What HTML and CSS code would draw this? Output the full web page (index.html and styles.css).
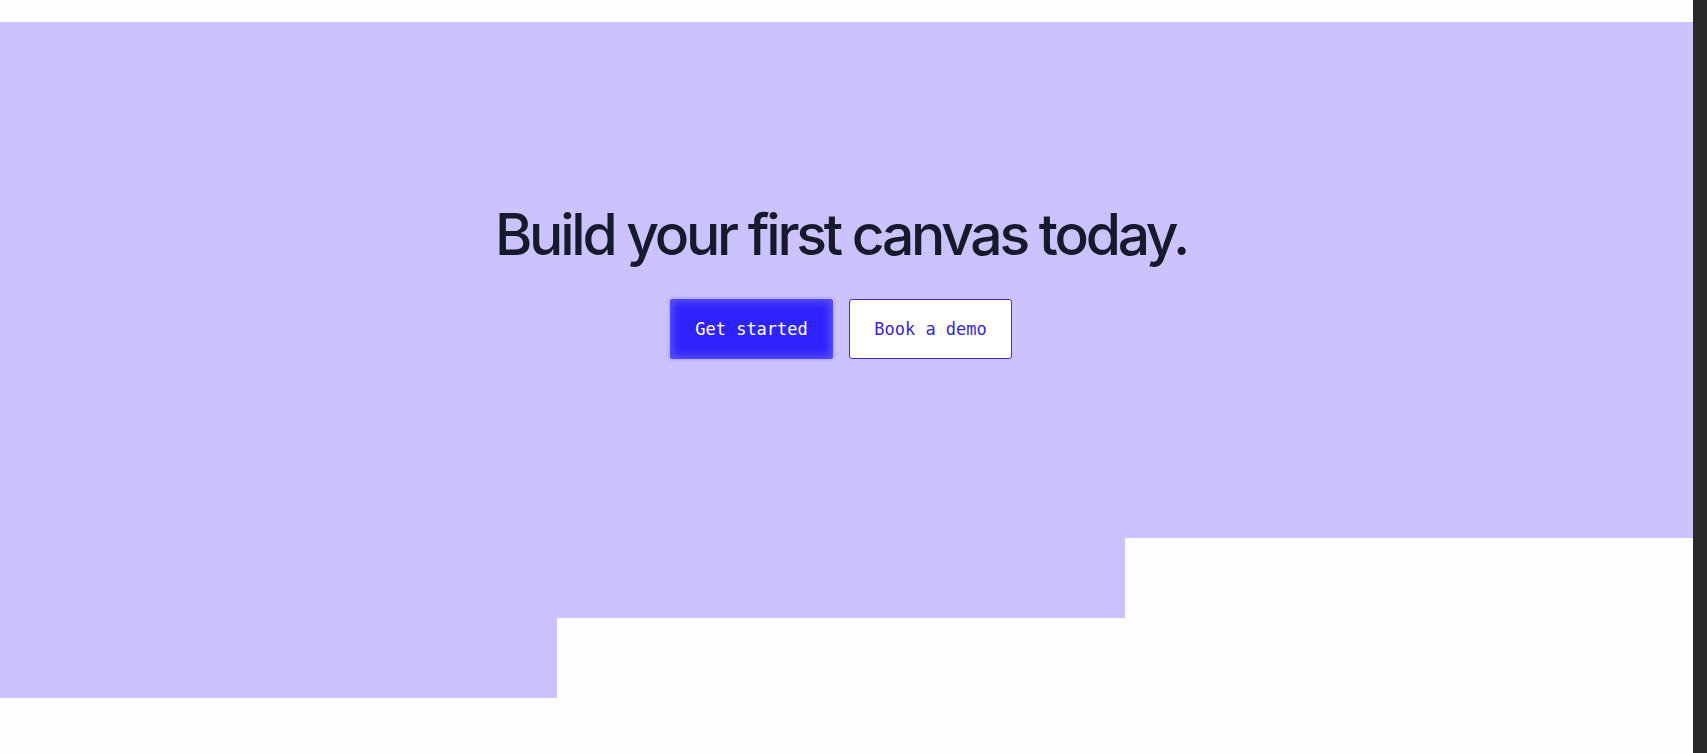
FILE: index.html
```html
<!DOCTYPE html>
<html lang="en">
<head>
<meta charset="UTF-8">
<meta name="viewport" content="width=device-width, initial-scale=1.0">
<title>Build your first canvas today</title>
<link rel="stylesheet" href="styles.css">
</head>
<body>
<div class="page">
  <main class="content">
    <section class="cta">
      <h1 class="cta-title">Build your first canvas today.</h1>
      <div class="cta-actions">
        <a class="btn btn-primary" href="#">Get started</a>
        <a class="btn btn-outline" href="#">Book a demo</a>
      </div>
    </section>
    <div class="steps">
      <div class="step step-tall"></div>
      <div class="step step-mid"></div>
      <div class="step"></div>
    </div>
  </main>
  <div class="scroll-track"></div>
</div>
</body>
</html>
```

FILE: styles.css
```css
* {
  box-sizing: border-box;
}
body {
  margin: 0;
  background: #fefefe;
  font-family: 'Inter', 'Liberation Sans', sans-serif;
  overflow: hidden;
}
.page {
  display: flex;
  height: 753px;
}
.content {
  flex: 1;
  padding-top: 22px;
}
.scroll-track {
  width: 14px;
  background: #2b2b2b;
}
.cta {
  background: #ccc2fe;
  height: 516px;
  display: flex;
  flex-direction: column;
  align-items: center;
  justify-content: center;
  gap: 33px;
  padding: 3px 11px 0 0;
}
.cta-title {
  margin: 0;
  font-size: 57px;
  font-weight: 500;
  letter-spacing: -0.057em;
  line-height: 1.1;
  color: #171a2d;
}
.cta-actions {
  display: flex;
  gap: 16px;
}
.btn {
  display: flex;
  align-items: center;
  justify-content: center;
  width: 163px;
  height: 60px;
  border-radius: 3px;
  font-family: 'DejaVu Sans Mono', 'Liberation Mono', monospace;
  font-size: 17px;
  text-decoration: none;
}
.btn-primary {
  background: #2e23fb;
  color: #ffffff;
  box-shadow: inset 0 0 9px 3px rgba(105, 95, 255, 0.8), 0 0 4px rgba(60, 50, 250, 0.35);
}
.btn-outline {
  background: #ffffff;
  color: #3528cf;
  border: 1px solid #3a2fc2;
}
.steps {
  display: grid;
  grid-template-columns: 557px 568px 1fr;
  align-items: start;
}
.step {
  background: #ccc2fe;
}
.step-tall {
  height: 160px;
}
.step-mid {
  height: 80px;
}
```
